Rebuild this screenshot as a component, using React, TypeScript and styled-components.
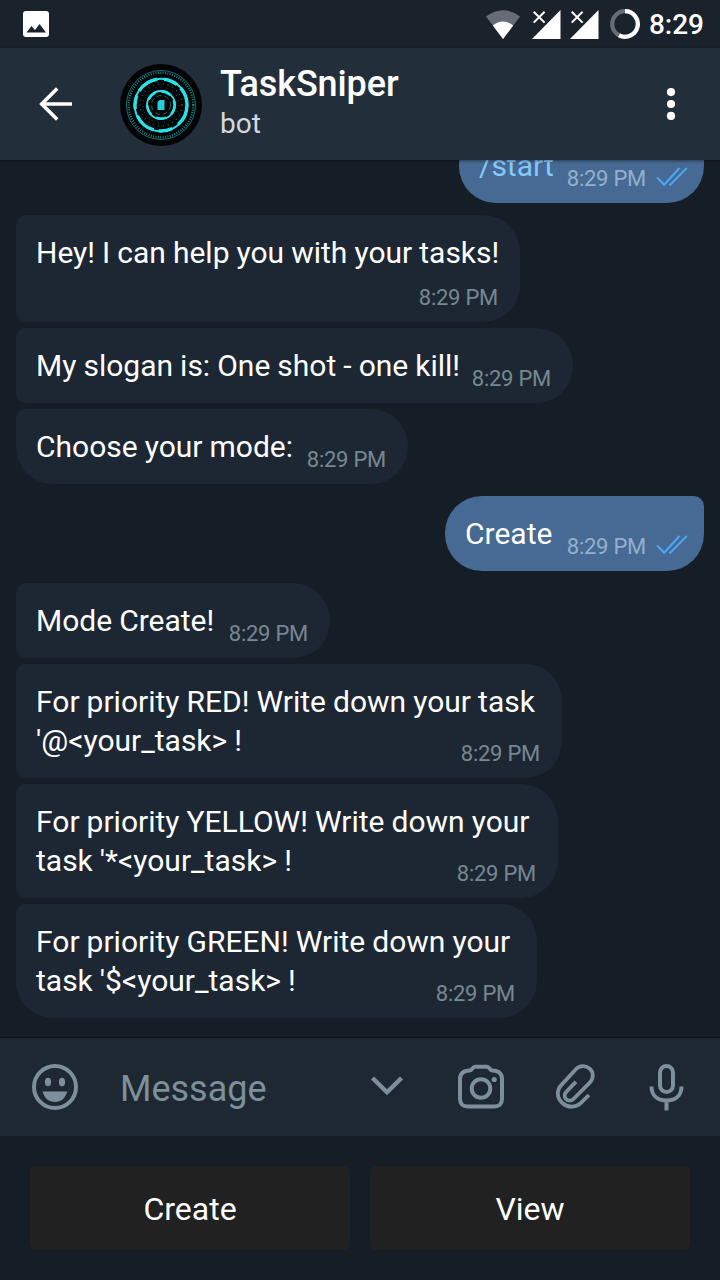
import React from "react";
import styled, { createGlobalStyle } from "styled-components";

const GlobalStyle = createGlobalStyle`
  * { box-sizing: border-box; }
  html, body { margin: 0; padding: 0; background: #151d26; }
  body { font-family: Roboto, "Liberation Sans", sans-serif; }
  svg { display: block; flex: none; }
`;

const Screen = styled.div`
  width: 720px;
  height: 1280px;
  display: flex;
  flex-direction: column;
  overflow: hidden;
  background: #151d26;
  color: #fff;
`;

const StatusBar = styled.div`
  height: 48px;
  flex: none;
  display: flex;
  align-items: center;
  justify-content: space-between;
  padding: 0 16px 0 23px;
  background: #1a222c;
`;

const StatusIcons = styled.div`
  display: flex;
  align-items: center;
`;

const Clock = styled.span`
  font-size: 28px;
  line-height: 48px;
  font-weight: 500;
  margin-left: 9px;
  padding-top: 2px;
`;

const Header = styled.header`
  height: 112px;
  flex: none;
  display: flex;
  align-items: center;
  padding: 0 44px 0 38px;
  background: #232e3b;
  position: relative;
  box-shadow: 0 1px 3px rgba(0, 0, 0, 0.45);
`;

const Avatar = styled.div`
  width: 82px;
  height: 82px;
  margin: 2px 18px 0 46px;
`;

const Titles = styled.div`
  flex: 1;
  display: flex;
  flex-direction: column;
  padding-bottom: 4px;
`;

const Title = styled.h1`
  margin: 0;
  font-size: 36px;
  line-height: 44px;
  font-weight: 500;
  letter-spacing: -0.1px;
`;

const Subtitle = styled.span`
  font-size: 28px;
  line-height: 36px;
  color: #d3d8dd;
`;

const Chat = styled.main`
  flex: 1;
  min-height: 0;
  display: flex;
  flex-direction: column;
  justify-content: flex-end;
  padding: 0 16px 19px;
  overflow: hidden;
`;

const Group = styled.div<{ $out?: boolean }>`
  display: flex;
  flex: none;
  flex-direction: column;
  align-items: ${(p) => (p.$out ? "flex-end" : "flex-start")};
  gap: 6px;
  margin-top: 12px;
`;

const Bubble = styled.div<{ $w: number; $out?: boolean; $last?: boolean }>`
  width: ${(p) => p.$w}px;
  display: flex;
  flex-direction: column;
  align-items: flex-start;
  padding: 18px ${(p) => (p.$out ? 16 : 22)}px 11px 20px;
  background: ${(p) => (p.$out ? "#466a94" : "#1d2733")};
  border-radius: ${(p) => (p.$out ? "37px 10px 37px 37px" : p.$last ? "10px 37px 37px 37px" : "10px 37px 37px 10px")};
`;

const Line = styled.div<{ $link?: boolean }>`
  font-size: 30px;
  line-height: 39px;
  word-spacing: -0.4px;
  white-space: pre;
  color: ${(p) => (p.$link ? "#83c9fb" : "#fff")};
`;

const LastRow = styled.div<{ $timeOnly?: boolean }>`
  width: 100%;
  height: ${(p) => (p.$timeOnly ? 39 : 46)}px;
  display: flex;
  align-items: flex-start;
`;

const Meta = styled.div<{ $out?: boolean }>`
  display: flex;
  align-items: center;
  align-self: flex-end;
  gap: 10px;
  margin-left: auto;
  font-size: 22px;
  line-height: 26px;
  letter-spacing: -0.25px;
  white-space: nowrap;
  color: ${(p) => (p.$out ? "#93b0cc" : "#768792")};

  svg {
    margin-bottom: 5px;
  }
`;

const Composer = styled.div`
  height: 99px;
  flex: none;
  display: flex;
  align-items: center;
  padding: 0 36px 0 31px;
  background: #1e2832;
  border-top: 1px solid #0e141b;
  color: #7c8f9b;
`;

const Placeholder = styled.span`
  flex: 1;
  margin-left: 41px;
  font-size: 36px;
  line-height: 44px;
  padding-top: 4px;
`;

const Tools = styled.div`
  display: flex;
  align-items: center;
`;

const Keyboard = styled.div`
  height: 144px;
  flex: none;
  display: grid;
  grid-template-columns: 1fr 1fr;
  gap: 20px;
  padding: 30px;
  background: #151d26;
`;

const Key = styled.button`
  border: 0;
  border-radius: 6px;
  background: #212121;
  color: #fff;
  font: 400 32px/38px Roboto, "Liberation Sans", sans-serif;
  padding: 1px 0 0;
`;

const Spacer = styled.div<{ $w: number }>`
  width: ${(p) => p.$w}px;
`;

const Ticks = () => (
  <svg width="32" height="20" viewBox="0 0 32 20" fill="none" stroke="#4ba7f1" strokeWidth="2">
    <path d="M1 10.5 8.2 17.7 23.5 1M13.5 17 14.3 17.7 30.7 1" />
  </svg>
);

const Signal = () => (
  <svg width="29" height="29" viewBox="0 0 29 29">
    <path d="M28.5 0V29H0Z" fill="#fff" />
    <path d="M1.5 1.5 13 13M13 1.5 1.5 13" stroke="#1a222c" strokeWidth="5" />
    <path d="M1.7 1.7 12.6 12.6M12.6 1.7 1.7 12.6" stroke="#fff" strokeWidth="2" />
  </svg>
);

const Emblem = () => (
  <svg width="82" height="82" viewBox="0 0 82 82" fill="none">
    <circle cx="41" cy="41" r="41" fill="#020405" />
    <g stroke="#26e3ea">
      <circle cx="41" cy="41" r="34.5" strokeWidth="0.8" opacity="0.6" />
      <circle cx="41" cy="41" r="32.3" strokeWidth="2.4" strokeDasharray="1 1.4" opacity="0.55" />
      <circle cx="41" cy="41" r="26.3" strokeWidth="2" />
      <circle cx="41" cy="41" r="26" strokeWidth="3.4" strokeDasharray="22 7 14 5" />
      <circle cx="41" cy="41" r="21" strokeWidth="1.5" strokeDasharray="1 4" opacity="0.4" />
      <circle cx="41" cy="41" r="18" strokeWidth="1" strokeDasharray="1 5" opacity="0.35" />
      <circle cx="41" cy="41" r="14" strokeWidth="1.8" />
      <circle cx="41" cy="41" r="13.6" strokeWidth="2.6" strokeDasharray="10 6" />
      <circle cx="41" cy="41" r="9.5" strokeWidth="0.9" strokeDasharray="5 3" opacity="0.5" />
    </g>
    <path d="M39.5 36H44.5V46H37.5V38Z" fill="#26cdd6" />
  </svg>
);

interface Message {
  lines: string[];
  width: number;
  timeBelow?: boolean;
  last?: boolean;
  link?: boolean;
}

const thread: { out?: boolean; messages: Message[] }[] = [
  { out: true, messages: [{ lines: ["/start"], width: 245, link: true }] },
  {
    messages: [
      { lines: ["Hey! I can help you with your tasks!"], width: 504, timeBelow: true },
      { lines: ["My slogan is: One shot - one kill!"], width: 557 },
      { lines: ["Choose your mode:"], width: 392, last: true },
    ],
  },
  { out: true, messages: [{ lines: ["Create"], width: 259 }] },
  {
    messages: [
      { lines: ["Mode Create!"], width: 314 },
      { lines: ["For priority RED! Write down your task", "'@<your_task> !"], width: 546 },
      { lines: ["For priority YELLOW! Write down your", "task '*<your_task> !"], width: 542 },
      { lines: ["For priority GREEN! Write down your", "task '$<your_task> !"], width: 521, last: true },
    ],
  },
];

const MessageBubble = ({ message, out }: { message: Message; out?: boolean }) => {
  const { lines, width, timeBelow, last, link } = message;
  const full = timeBelow ? lines : lines.slice(0, -1);
  return (
    <Bubble $w={width} $out={out} $last={last}>
      {full.map((line) => (
        <Line key={line} $link={link}>
          {line}
        </Line>
      ))}
      <LastRow $timeOnly={timeBelow}>
        {!timeBelow && <Line $link={link}>{lines[lines.length - 1]}</Line>}
        <Meta $out={out}>
          8:29 PM
          {out && <Ticks />}
        </Meta>
      </LastRow>
    </Bubble>
  );
};

export default function App() {
  return (
    <Screen>
      <GlobalStyle />
      <StatusBar>
        <svg width="26" height="26" viewBox="0 0 26 26">
          <rect width="26" height="26" rx="3" fill="#fff" />
          <path d="M3.5 21.5 8.5 15 12 19 16.5 13 23 21.5Z" fill="#1a222c" />
        </svg>
        <StatusIcons>
          <svg width="34" height="29" viewBox="0 0 34 29">
            <path d="M0 6.5Q17-6 34 6.5L17 29Z" fill="#676d76" />
            <path d="M6.8 15.5Q17 7.5 27.2 15.5L17 29Z" fill="#fff" />
          </svg>
          <Spacer $w={12} />
          <Signal />
          <Spacer $w={9} />
          <Signal />
          <Spacer $w={11} />
          <svg width="30" height="30" viewBox="0 0 30 30" fill="none" strokeWidth="4.2">
            <circle cx="15" cy="15" r="12.8" stroke="#676d76" />
            <path d="M15 2.2A12.8 12.8 0 1 1 9 26.3" stroke="#fff" />
          </svg>
          <Clock>8:29</Clock>
        </StatusIcons>
      </StatusBar>
      <Header>
        <svg width="36" height="34" viewBox="0 0 36 34" fill="none" stroke="#fff" strokeWidth="3.6">
          <path d="M34 17H4M19.2 1.5 3.7 17 19.2 32.5" />
        </svg>
        <Avatar>
          <Emblem />
        </Avatar>
        <Titles>
          <Title>TaskSniper</Title>
          <Subtitle>bot</Subtitle>
        </Titles>
        <svg width="10" height="32" viewBox="0 0 10 32" fill="#fff">
          <circle cx="5" cy="4.1" r="4.1" />
          <circle cx="5" cy="16" r="4.1" />
          <circle cx="5" cy="27.9" r="4.1" />
        </svg>
      </Header>
      <Chat>
        {thread.map((group, i) => (
          <Group key={i} $out={group.out}>
            {group.messages.map((m) => (
              <MessageBubble key={m.lines[0]} message={m} out={group.out} />
            ))}
          </Group>
        ))}
      </Chat>
      <Composer>
        <svg width="48" height="48" viewBox="0 0 48 48">
          <circle cx="24" cy="24" r="21" fill="none" stroke="currentColor" strokeWidth="4" />
          <ellipse cx="17" cy="19" rx="3.1" ry="4.3" fill="currentColor" />
          <ellipse cx="31" cy="19" rx="3.1" ry="4.3" fill="currentColor" />
          <path d="M11.5 28.5H36.3C34 35.5 30 39 24 39S13.5 35.5 11.5 28.5Z" fill="currentColor" />
        </svg>
        <Placeholder>Message</Placeholder>
        <Tools>
          <svg width="34" height="24" viewBox="0 0 34 24" fill="none" stroke="currentColor" strokeWidth="4.4">
            <path d="M2.5 3 17 17.2 31.5 3" />
          </svg>
          <Spacer $w={53} />
          <svg width="48" height="46" viewBox="0 0 48 46" fill="none" stroke="currentColor" strokeWidth="4">
            <path d="M12.5 6.5C15 6.5 15.5 2.8 18 2.8H30C32.5 2.8 33 6.5 35.5 6.5C41.5 6.5 45 9.5 45 15V35C45 40 42 42.5 37.5 42.5H10.5C6 42.5 3 40 3 35V15C3 9.5 6.5 6.5 12.5 6.5Z" />
            <circle cx="24" cy="24.5" r="9.3" />
            <circle cx="37.2" cy="15.5" r="2.6" fill="currentColor" stroke="none" />
          </svg>
          <Spacer $w={50} />
          <svg width="42" height="48" viewBox="0 0 42 48" fill="none" stroke="currentColor" strokeWidth="3.8">
            <path d="M34 32L25.7 40.2C20.8 44.8 13.3 45 7.6 40.2C1.4 34.8 1.4 27 6.7 21.6L20.9 6.2C24.7 2.3 30.4 1.9 34.7 5.7C39 9.6 38.5 15.8 34.7 19.7L18.5 36C16.2 38.3 12.9 38.2 11 36C9.1 33.8 9.4 30.7 11.5 28.6L20.9 18.7" />
          </svg>
          <Spacer $w={51} />
          <svg width="36" height="50" viewBox="0 0 36 50" fill="none" stroke="currentColor" strokeWidth="4">
            <rect x="12" y="4" width="13" height="26" rx="6.5" />
            <path d="M3.5 24.500C3.5 34 10 38.5 18.500 38.5S33.500 34 33.500 24.500M18.500 38.5V48.500" />
          </svg>
        </Tools>
      </Composer>
      <Keyboard>
        <Key>Create</Key>
        <Key>View</Key>
      </Keyboard>
    </Screen>
  );
}
